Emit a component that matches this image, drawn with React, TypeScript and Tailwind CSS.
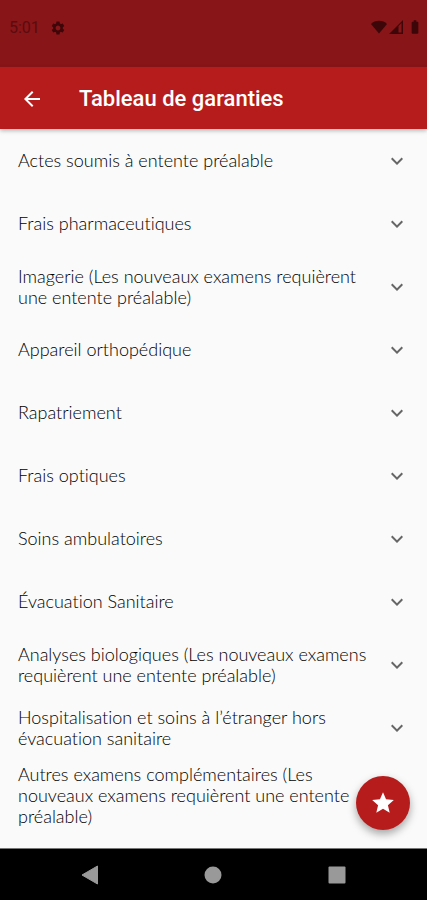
import React from 'react';
import { MdArrowBack, MdBatteryFull, MdExpandMore, MdSettings, MdStar } from 'react-icons/md';

const guarantees = [
  'Actes soumis à entente préalable',
  'Frais pharmaceutiques',
  'Imagerie (Les nouveaux examens requièrent une entente préalable)',
  'Appareil orthopédique',
  'Rapatriement',
  'Frais optiques',
  'Soins ambulatoires',
  'Évacuation Sanitaire',
  'Analyses biologiques (Les nouveaux examens requièrent une entente préalable)',
  'Hospitalisation et soins à l’étranger hors évacuation sanitaire',
  'Autres examens complémentaires (Les nouveaux examens requièrent une entente préalable)',
];

function StatusBar() {
  return (
    <div className="flex h-[67px] items-start justify-between bg-[#881518] pt-[18px] pr-1 pl-[9px] text-[#3d0608]">
      <div className="flex h-5 items-center gap-[10px]">
        <span className="text-base leading-5 text-[#5a0c0f]">5:01</span>
        <MdSettings className="size-4" />
      </div>
      <div className="flex h-[18px] items-center">
        <svg className="h-[14px] w-4" viewBox="0 0 16 14" fill="currentColor">
          <path d="M8 13.5 0 4C2 2 4.8.8 8 .8S14 2 16 4z" />
        </svg>
        <svg className="ml-[2px] h-[14px] w-[14px]" viewBox="0 0 14 14" fill="currentColor">
          <path fillRule="evenodd" d="M0 14 14 0v14zM9.500 6v6.500h3V3z" />
        </svg>
        <MdBatteryFull className="ml-1 size-4" />
      </div>
    </div>
  );
}

function NavigationBar() {
  return (
    <nav className="flex h-[52px] items-center justify-around border-t border-[#777] bg-black px-7 text-[#999]">
      <button type="button" aria-label="Retour">
        <svg className="h-5 w-[18px]" viewBox="0 0 18 20" fill="currentColor">
          <path d="M16.500 1v18L1 10z" stroke="currentColor" strokeLinejoin="round" />
        </svg>
      </button>
      <button type="button" aria-label="Accueil">
        <svg className="size-[18px]" viewBox="0 0 18 18" fill="currentColor">
          <circle cx="9" cy="9" r="8.500" />
        </svg>
      </button>
      <button type="button" aria-label="Applications récentes">
        <svg className="size-[18px]" viewBox="0 0 18 18" fill="currentColor">
          <rect x=".5" y=".5" width="17" height="17" rx="1" />
        </svg>
      </button>
    </nav>
  );
}

export default function App() {
  return (
    <div className="flex min-h-screen flex-col bg-[#fafafa] font-[Roboto,sans-serif]">
      <StatusBar />
      <header className="relative flex h-[62px] items-center bg-[#b71c1c] pt-[2px] pl-5 text-white shadow-[0_2px_4px_rgba(0,0,0,0.25)]">
        <button type="button" aria-label="Retour">
          <MdArrowBack className="size-6" />
        </button>
        <h1 className="ml-[35px] text-[22px] leading-7 font-medium">Tableau de garanties</h1>
      </header>

      <main className="relative flex-1">
        <ul className="font-[Lato,sans-serif] font-light text-black [font-variant-ligatures:none]">
          {guarantees.map((label) => (
            <li key={label}>
              <button
                type="button"
                className="flex min-h-[63px] w-full items-center justify-between gap-4 px-[18px] py-[5px] text-left text-lg leading-[21px]"
              >
                <span>{label}</span>
                <MdExpandMore className="size-6 shrink-0 text-[#666]" />
              </button>
            </li>
          ))}
        </ul>
        <button
          type="button"
          aria-label="Favoris"
          className="absolute right-[17px] bottom-[18px] flex size-[54px] items-center justify-center rounded-full bg-[#b71c1c] text-white shadow-[0_4px_8px_rgba(0,0,0,0.35)]"
        >
          <MdStar className="size-[26px]" />
        </button>
      </main>
      <NavigationBar />
    </div>
  );
}
